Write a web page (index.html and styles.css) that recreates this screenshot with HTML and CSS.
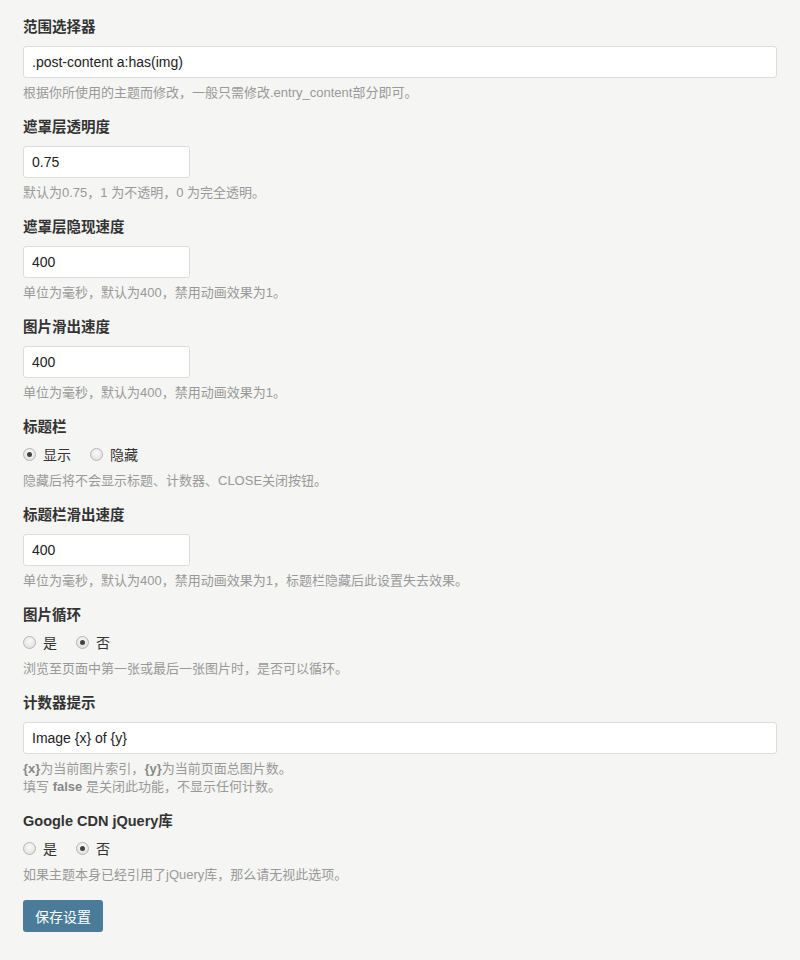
FILE: index.html
```html
<!DOCTYPE html>
<html>
<head>
	<title>设置</title>
	<meta charset="utf-8">
	<link rel="stylesheet" href="styles.css">
</head>
<body>
<form class="settings" action="" method="post" onsubmit="return false;">

	<div class="field">
		<label class="label" for="selector">范围选择器</label>
		<input type="text" class="text wide" id="selector" value=".post-content a:has(img)">
		<p class="hint">根据你所使用的主题而修改，一般只需修改.entry_content部分即可。</p>
	</div>

	<div class="field">
		<label class="label" for="opacity">遮罩层透明度</label>
		<input type="text" class="text short" id="opacity" value="0.75">
		<p class="hint">默认为0.75，1 为不透明，0 为完全透明。</p>
	</div>

	<div class="field">
		<label class="label" for="fade">遮罩层隐现速度</label>
		<input type="text" class="text short" id="fade" value="400">
		<p class="hint">单位为毫秒，默认为400，禁用动画效果为1。</p>
	</div>

	<div class="field">
		<label class="label" for="slide">图片滑出速度</label>
		<input type="text" class="text short" id="slide" value="400">
		<p class="hint">单位为毫秒，默认为400，禁用动画效果为1。</p>
	</div>

	<div class="field">
		<span class="label">标题栏</span>
		<div class="radios">
			<label class="radio"><input type="radio" name="titlebar" checked> 显示</label>
			<label class="radio"><input type="radio" name="titlebar"> 隐藏</label>
		</div>
		<p class="hint">隐藏后将不会显示标题、计数器、CLOSE关闭按钮。</p>
	</div>

	<div class="field">
		<label class="label" for="titlespeed">标题栏滑出速度</label>
		<input type="text" class="text short" id="titlespeed" value="400">
		<p class="hint">单位为毫秒，默认为400，禁用动画效果为1，标题栏隐藏后此设置失去效果。</p>
	</div>

	<div class="field">
		<span class="label">图片循环</span>
		<div class="radios">
			<label class="radio"><input type="radio" name="loop"> 是</label>
			<label class="radio"><input type="radio" name="loop" checked> 否</label>
		</div>
		<p class="hint">浏览至页面中第一张或最后一张图片时，是否可以循环。</p>
	</div>

	<div class="field">
		<label class="label" for="counter">计数器提示</label>
		<input type="text" class="text wide" id="counter" value="Image {x} of {y}">
		<p class="hint"><b>{x}</b>为当前图片索引，<b>{y}</b>为当前页面总图片数。<br>填写 <b>false</b> 是关闭此功能，不显示任何计数。</p>
	</div>

	<div class="field">
		<span class="label">Google CDN jQuery库</span>
		<div class="radios">
			<label class="radio"><input type="radio" name="cdn"> 是</label>
			<label class="radio"><input type="radio" name="cdn" checked> 否</label>
		</div>
		<p class="hint">如果主题本身已经引用了jQuery库，那么请无视此选项。</p>
	</div>

	<button type="submit" class="save">保存设置</button>
</form>
</body>
</html>
```
FILE: styles.css
```css
body {
	margin: 0;
	background-color: #f5f5f3;
	font-family: "Liberation Sans", Arial, "Noto Sans CJK SC", sans-serif;
	color: #333;
}
.settings {
	padding: 18px 23px 0 23px;
}
.field {
	margin-bottom: 16px;
}
.label {
	display: block;
	font-size: 14.5px;
	font-weight: bold;
	line-height: 18px;
	height: 18px;
	color: #333;
	margin-bottom: 10px;
}
.text {
	display: block;
	box-sizing: border-box;
	height: 32px;
	padding: 0 8px;
	border: 1px solid #dcdcdc;
	border-radius: 3px;
	background: #fff;
	font-family: inherit;
	font-size: 14px;
	color: #222;
	outline: none;
}
.wide {
	width: 754px;
}
.short {
	width: 167px;
}
.hint {
	margin: 6px 0 0 0;
	font-size: 13px;
	line-height: 18px;
	color: #999;
}
.hint b {
	color: #888;
}
.radios {
	display: flex;
	gap: 19px;
	height: 20px;
	align-items: center;
	margin-top: -2px;
}
.radios + .hint {
	margin-top: 8px;
}
.radio {
	display: flex;
	align-items: center;
	font-size: 14px;
	color: #333;
}
.radio input {
	appearance: none;
	-webkit-appearance: none;
	box-sizing: border-box;
	width: 13px;
	height: 13px;
	margin: 0 7px 0 0;
	border: 1px solid #b5b5b5;
	border-radius: 50%;
	background: radial-gradient(circle at 50% 35%, #fafafa, #dcdcdc);
	position: relative;
}
.radio input:checked::after {
	content: "";
	position: absolute;
	left: 3px;
	top: 3px;
	width: 5px;
	height: 5px;
	border-radius: 50%;
	background: #444;
}
.save {
	display: block;
	margin-top: 0;
	width: 80px;
	height: 32px;
	border: 0;
	border-radius: 3px;
	background-color: #4a7c99;
	color: #fff;
	font-family: inherit;
	font-size: 14px;
}
```
